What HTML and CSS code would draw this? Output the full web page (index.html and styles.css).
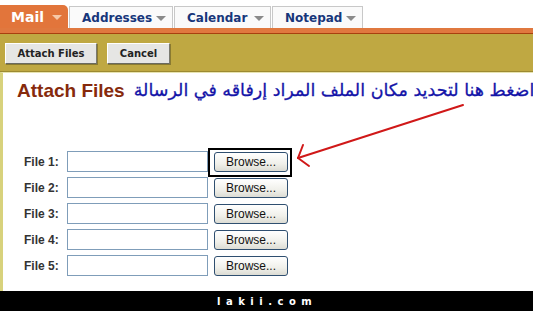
FILE: index.html
```html
<!DOCTYPE html>
<html>
<head>
<meta charset="utf-8">
<link rel="stylesheet" href="styles.css">
</head>
<body>
<div class="page">
  <div class="tabs">
    <div class="tab tab-active"><span>Mail</span><i class="caret caret-light"></i></div>
    <div class="tab tab-addr"><span>Addresses</span><i class="caret"></i></div>
    <div class="tab tab-cal"><span>Calendar</span><i class="caret"></i></div>
    <div class="tab tab-note"><span>Notepad</span><i class="caret"></i></div>
  </div>
  <div class="orange-bar"></div>
  <div class="toolbar">
    <button class="tbtn tbtn-attach">Attach Files</button>
    <button class="tbtn tbtn-cancel">Cancel</button>
  </div>
  <div class="content">
    <div class="title-row">
      <h1 class="title">Attach Files</h1>
      <div class="ar" dir="rtl">اضغط هنا لتحديد مكان الملف المراد إرفاقه في الرسالة</div>
    </div>
    <div class="rows">
      <div class="row"><label>File 1:</label><span class="field"></span><span class="browse browse-first">Browse...</span></div>
      <div class="row"><label>File 2:</label><span class="field"></span><span class="browse">Browse...</span></div>
      <div class="row"><label>File 3:</label><span class="field"></span><span class="browse">Browse...</span></div>
      <div class="row"><label>File 4:</label><span class="field"></span><span class="browse">Browse...</span></div>
      <div class="row"><label>File 5:</label><span class="field"></span><span class="browse">Browse...</span></div>
    </div>
    <svg class="arrow" width="533" height="311" viewBox="0 0 533 311">
      <g stroke="#d01818" stroke-width="2" fill="none" stroke-linecap="round">
        <line x1="463" y1="105" x2="298" y2="158"/>
        <line x1="298" y1="158" x2="303" y2="145"/>
        <line x1="298" y1="158" x2="309" y2="166"/>
      </g>
    </svg>
  </div>
  <div class="footer">lakii.com</div>
</div>
</body>
</html>
```

FILE: styles.css
```css
* { box-sizing: border-box; }
html, body { margin: 0; padding: 0; background: #fff; }
.page {
  width: 533px;
  height: 311px;
  overflow: hidden;
  position: relative;
  display: flex;
  flex-direction: column;
  font-family: "Liberation Sans", Arial, sans-serif;
}
.tabs {
  height: 28px;
  display: flex;
  align-items: flex-end;
  padding-top: 6px;
  flex-shrink: 0;
}
.tab {
  height: 22px;
  display: flex;
  align-items: center;
  justify-content: space-between;
  padding: 0 6px 0 12px;
  background: #fafafa;
  border: 1px solid #c8c8c8;
  border-bottom: none;
  margin-right: 1px;
  font-family: "DejaVu Sans", Verdana, sans-serif;
  font-weight: bold;
  font-size: 12px;
  color: #17367a;
}
.tab-active {
  height: 23px;
  background: #e2753b;
  border: none;
  border-top-right-radius: 5px;
  color: #fff;
  font-size: 14px;
  padding-left: 11px;
  width: 68px;
}
.tab-addr { width: 104px; }
.tab-cal { width: 97px; }
.tab-note { width: 91px; }
.caret {
  width: 0; height: 0;
  border-left: 5px solid transparent;
  border-right: 5px solid transparent;
  border-top: 5px solid #8a8a8a;
  margin-top: 1px;
}
.caret-light { border-top-color: #f6c8a8; }
.orange-bar {
  height: 6px;
  background: #e0783f;
  border-bottom: 1px solid #a8400f;
  flex-shrink: 0;
}
.toolbar {
  height: 38px;
  background: #bfa842;
  border-bottom: 1px solid #9c8a32;
  display: flex;
  align-items: center;
  gap: 10px;
  padding: 2px 0 0 5px;
  flex-shrink: 0;
}
.tbtn {
  height: 21px;
  margin: 0;
  padding: 0;
  background: #e6e6e4;
  border: 1px solid;
  border-color: #ffffff #7a7a70 #6a6a60 #ffffff;
  box-shadow: 1px 1px 0 #8a7a30;
  font-family: "DejaVu Sans", Verdana, sans-serif;
  font-weight: bold;
  font-size: 10px;
  color: #222;
}
.tbtn-attach { width: 92px; }
.tbtn-cancel { width: 63px; }
.content {
  flex: 1;
  border-left: 3px solid #d8d27c;
  border-top: 1px solid #e8e4b0;
  background: #fff;
  padding: 0 0 0 14px;
  overflow: hidden;
}
.title-row {
  display: flex;
  align-items: flex-start;
  gap: 9px;
  height: 78px;
  white-space: nowrap;
}
.title {
  margin: 7px 0 0 0;
  font-size: 19px;
  font-weight: bold;
  color: #862a0c;
}
.ar {
  margin-top: 7px;
  font-family: "DejaVu Sans", "Noto Sans", sans-serif;
  font-size: 17.5px;
  color: #1414a8;
  -webkit-text-stroke: 0.3px #1414a8;
  flex-shrink: 0;
}
.rows {
  display: flex;
  flex-direction: column;
  gap: 5px;
  padding-left: 7px;
}
.row {
  display: flex;
  align-items: center;
  height: 21px;
}
.row label {
  width: 43px;
  font-size: 12px;
  font-weight: bold;
  color: #333;
}
.field {
  width: 141px;
  height: 21px;
  border: 1px solid #7f9db9;
  background: #fff;
}
.browse {
  margin-left: 6px;
  width: 74px;
  height: 20px;
  border: 1px solid #2f4f70;
  border-radius: 3px;
  background: linear-gradient(#ffffff, #f0f0ea 60%, #dcdcd4);
  font-size: 12px;
  color: #111;
  display: flex;
  align-items: center;
  justify-content: center;
}
.browse-first { position: relative; }
.browse-first::after {
  content: "";
  position: absolute;
  left: -7px;
  right: -5px;
  top: -5px;
  bottom: -6px;
  border: 2px solid #000;
}
.arrow {
  position: absolute;
  left: 0;
  top: 0;
  pointer-events: none;
}
.footer {
  height: 20px;
  background: #000;
  color: #fff;
  font-family: "DejaVu Sans", Verdana, sans-serif;
  font-weight: bold;
  font-size: 10px;
  letter-spacing: 5.5px;
  display: flex;
  align-items: center;
  padding-left: 217px;
  flex-shrink: 0;
}
```
